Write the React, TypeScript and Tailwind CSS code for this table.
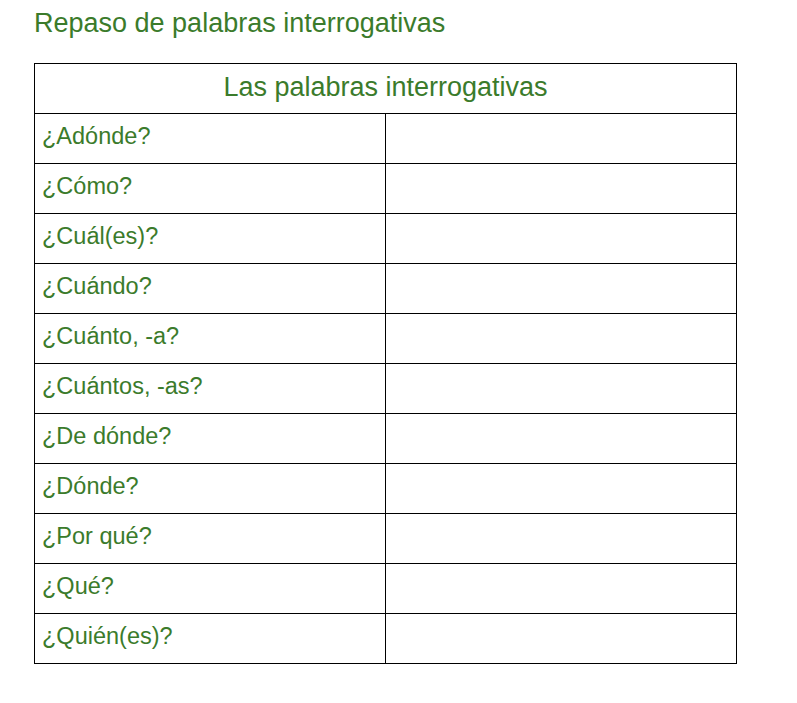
import React from "react";

const palabras = [
  "¿Adónde?",
  "¿Cómo?",
  "¿Cuál(es)?",
  "¿Cuándo?",
  "¿Cuánto, -a?",
  "¿Cuántos, -as?",
  "¿De dónde?",
  "¿Dónde?",
  "¿Por qué?",
  "¿Qué?",
  "¿Quién(es)?",
];

export default function App() {
  return (
    <div className="min-h-screen bg-white font-['Liberation_Sans',Arial,sans-serif] text-[#3b7b2b]">
      <div className="pl-[34px] pt-[6px]">
        <h1 className="text-[27px] leading-[34px]">Repaso de palabras interrogativas</h1>
      </div>
      <table className="ml-[34px] mt-[23px] w-[703px] border-collapse border border-black">
        <thead>
          <tr>
            <th colSpan={2} className="h-[50px] border border-black p-0 pb-[2px] text-center text-[27px] font-normal">
              Las palabras interrogativas
            </th>
          </tr>
        </thead>
        <tbody>
          {palabras.map((p) => (
            <tr key={p}>
              <td className="h-[50px] w-[351px] border border-black px-[7px] py-0 pb-[3px] text-[23.5px]">{p}</td>
              <td className="h-[50px] border border-black p-0"></td>
            </tr>
          ))}
        </tbody>
      </table>
    </div>
  );
}
